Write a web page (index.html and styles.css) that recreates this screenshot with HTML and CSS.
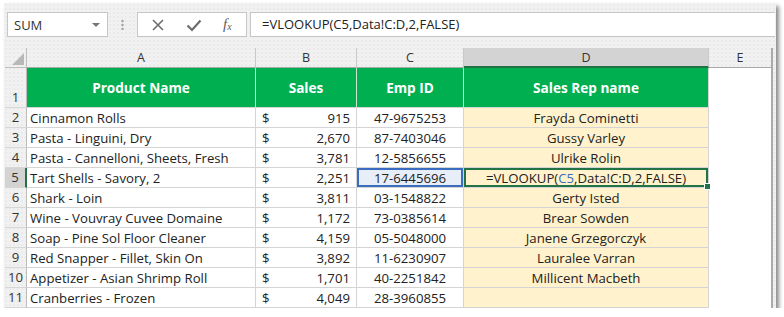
FILE: index.html
```html
<!DOCTYPE html>
<html lang="en">

<head>
    <meta charset="UTF-8">
    <title>VLOOKUP</title>
    <link rel="stylesheet" href="styles.css">
</head>

<body>
    <div class="window">
        <!--公式栏-->
        <div class="toolbar">
            <div class="namebox">
                <span>SUM</span>
                <span class="caret"></span>
            </div>
            <div class="grip"></div>
            <div class="fxbox">
                <svg width="14" height="14" viewBox="0 0 14 14">
                    <path d="M2 2 L12 12 M12 2 L2 12" stroke="#6d6d6d" stroke-width="1.6" fill="none" />
                </svg>
                <svg width="16" height="14" viewBox="0 0 16 14">
                    <path d="M1.5 7.5 L6 12 L14.5 2.5" stroke="#6d6d6d" stroke-width="2.2" fill="none" />
                </svg>
                <span class="fx"><i>f</i><sub>x</sub></span>
            </div>
            <div class="formula">=VLOOKUP(C5,Data!C:D,2,FALSE)</div>
        </div>
        <!--表格-->
        <div class="sheet">
            <div class="corner"></div>
            <div class="colhead">A</div>
            <div class="colhead">B</div>
            <div class="colhead">C</div>
            <div class="colhead active">D</div>
            <div class="colhead last">E</div>

            <div class="rowhead tall">1</div>
            <div class="th">Product Name</div>
            <div class="th">Sales</div>
            <div class="th">Emp ID</div>
            <div class="th">Sales Rep name</div>
            <div class="blank"></div>

            <div class="rowhead">2</div>
            <div class="cell">Cinnamon Rolls</div>
            <div class="cell money"><span>$</span><span>915</span></div>
            <div class="cell mid">47-9675253</div>
            <div class="cell mid rep">Frayda Cominetti</div>
            <div class="blank"></div>

            <div class="rowhead">3</div>
            <div class="cell">Pasta - Linguini, Dry</div>
            <div class="cell money"><span>$</span><span>2,670</span></div>
            <div class="cell mid">87-7403046</div>
            <div class="cell mid rep">Gussy Varley</div>
            <div class="blank"></div>

            <div class="rowhead">4</div>
            <div class="cell">Pasta - Cannelloni, Sheets, Fresh</div>
            <div class="cell money"><span>$</span><span>3,781</span></div>
            <div class="cell mid">12-5856655</div>
            <div class="cell mid rep">Ulrike Rolin</div>
            <div class="blank"></div>

            <div class="rowhead active">5</div>
            <div class="cell">Tart Shells - Savory, 2</div>
            <div class="cell money"><span>$</span><span>2,251</span></div>
            <div class="cell mid ref">17-6445696</div>
            <div class="cell mid rep edit">=VLOOKUP(<span class="blue">C5</span>,Data!C:D,2,FALSE)<span class="handle"></span></div>
            <div class="blank"></div>

            <div class="rowhead">6</div>
            <div class="cell">Shark - Loin</div>
            <div class="cell money"><span>$</span><span>3,811</span></div>
            <div class="cell mid">03-1548822</div>
            <div class="cell mid rep">Gerty Isted</div>
            <div class="blank"></div>

            <div class="rowhead">7</div>
            <div class="cell">Wine - Vouvray Cuvee Domaine</div>
            <div class="cell money"><span>$</span><span>1,172</span></div>
            <div class="cell mid">73-0385614</div>
            <div class="cell mid rep">Brear Sowden</div>
            <div class="blank"></div>

            <div class="rowhead">8</div>
            <div class="cell">Soap - Pine Sol Floor Cleaner</div>
            <div class="cell money"><span>$</span><span>4,159</span></div>
            <div class="cell mid">05-5048000</div>
            <div class="cell mid rep">Janene Grzegorczyk</div>
            <div class="blank"></div>

            <div class="rowhead">9</div>
            <div class="cell">Red Snapper - Fillet, Skin On</div>
            <div class="cell money"><span>$</span><span>3,892</span></div>
            <div class="cell mid">11-6230907</div>
            <div class="cell mid rep">Lauralee Varran</div>
            <div class="blank"></div>

            <div class="rowhead">10</div>
            <div class="cell">Appetizer - Asian Shrimp Roll</div>
            <div class="cell money"><span>$</span><span>1,701</span></div>
            <div class="cell mid">40-2251842</div>
            <div class="cell mid rep">Millicent Macbeth</div>
            <div class="blank"></div>

            <div class="rowhead">11</div>
            <div class="cell">Cranberries - Frozen</div>
            <div class="cell money"><span>$</span><span>4,049</span></div>
            <div class="cell mid">28-3960855</div>
            <div class="cell mid rep"></div>
            <div class="blank"></div>
        </div>
    </div>
</body>

</html>
```

FILE: styles.css
```css
html,
body {
    margin: 0;
    background: #fff;
    font-family: "Open Sans", "Noto Sans", sans-serif;
    color: #222;
}

body {
    padding: 3px 0 0 4px;
}

.window {
    width: 772px;
    height: 305px;
    background-color: #f1f1f1;
    background-image: radial-gradient(#e2e2e2 0.6px, transparent 0.8px);
    background-size: 4px 4px;
    box-shadow: 3px 3px 4px rgba(0, 0, 0, 0.45);
    overflow: hidden;
}

/*公式栏*/
.toolbar {
    display: flex;
    align-items: center;
    height: 25px;
    padding: 9px 0 0 3px;
}

.namebox {
    width: 101px;
    height: 25px;
    box-sizing: border-box;
    border: 1px solid #c6c6c6;
    background: #fff;
    display: flex;
    align-items: center;
    justify-content: space-between;
    padding: 0 7px 0 6px;
    font-size: 13px;
    color: #333;
}

.caret {
    width: 0;
    height: 0;
    border-left: 4px solid transparent;
    border-right: 4px solid transparent;
    border-top: 4px solid #777;
}

.grip {
    width: 3px;
    height: 11px;
    margin: 0 13px 0 13px;
    background-image: radial-gradient(#a8a8a8 1px, transparent 1.2px);
    background-size: 3px 4px;
}

.fxbox {
    width: 110px;
    height: 25px;
    box-sizing: border-box;
    border: 1px solid #c6c6c6;
    background: #fff;
    display: flex;
    align-items: center;
    padding: 0 0 0 13px;
    gap: 21px;
}

.fx {
    font-family: "Liberation Serif", serif;
    font-size: 15px;
    color: #5e5e5e;
    line-height: 1;
}

.fx sub {
    font-size: 10px;
    vertical-align: -1px;
    font-style: italic;
}

.formula {
    flex: 1;
    height: 25px;
    box-sizing: border-box;
    margin: 0 1px 0 3px;
    border: 1px solid #c6c6c6;
    border-right: none;
    background: #fff;
    padding: 0 0 0 11px;
    line-height: 23px;
    font-size: 13px;
    color: #222;
}

/*表格*/
.sheet {
    display: grid;
    grid-template-columns: 22px 229px 101px 107px 245px 64px;
    grid-template-rows: 20px 40px repeat(10, 20px);
    margin: 11px 0 0 1px;
    font-size: 13.2px;
}

.sheet > div {
    box-sizing: border-box;
}

.corner {
    border-right: 1px solid #bdbdbd;
    border-bottom: 1px solid #bdbdbd;
    position: relative;
}

.corner::after {
    content: '';
    position: absolute;
    right: 2px;
    bottom: 2px;
    border-left: 12px solid transparent;
    border-bottom: 12px solid #b8b8b8;
}

.colhead {
    border-right: 1px solid #c8c8c8;
    border-bottom: 1px solid #a8a8a8;
    text-align: center;
    line-height: 19px;
    color: #333;
    font-size: 12.5px;
}

.colhead.active {
    background: #d3d3d3;
    border-bottom: 2px solid #217346;
}

.colhead.last {
    border-right: 2px solid #ababab;
}

.rowhead {
    border-right: 1px solid #bdbdbd;
    border-bottom: 1px solid #d6d6d6;
    text-align: center;
    line-height: 19px;
    color: #333;
}

.rowhead.tall {
    display: flex;
    align-items: flex-end;
    justify-content: center;
}

.rowhead.active {
    background: #d3d3d3;
    border-right: 2px solid #217346;
}

.th {
    background: #00b050;
    color: #fff;
    font-weight: bold;
    font-size: 13.6px;
    display: flex;
    align-items: center;
    justify-content: center;
    border-right: 1px solid #c9e9d4;
    border-bottom: 1px solid #d4d4d4;
}

.th:nth-child(11) {
    border-right: 1px solid #d4d4d4;
}

.blank {
    background: #fff;
    border-right: 2px solid #ababab;
}

.cell {
    background: #fff;
    border-right: 1px solid #d4d4d4;
    border-bottom: 1px solid #d4d4d4;
    padding: 0 3px;
    line-height: 20px;
    white-space: nowrap;
    position: relative;
}

.money {
    display: flex;
    justify-content: space-between;
    padding: 0 6px 0 6px;
}

.mid {
    text-align: center;
}

.rep {
    background: #fff2cc;
}

.ref {
    background: #e8eef8;
    box-shadow: inset 0 0 0 2px #3a6cc0;
}

.edit {
    box-shadow: inset 0 0 0 2px #217346;
    overflow: visible;
}

.blue {
    color: #3a6cc0;
}

.handle {
    position: absolute;
    right: -3px;
    bottom: -3px;
    width: 5px;
    height: 5px;
    background: #217346;
    border: 1px solid #fff;
    z-index: 1;
}
```
